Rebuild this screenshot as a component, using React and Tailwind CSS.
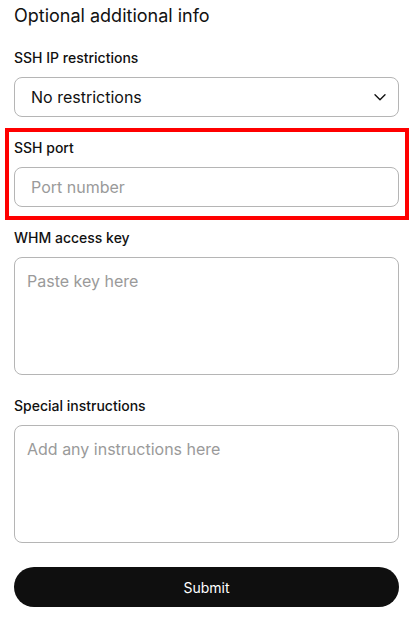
import React from "react";

const inputBase =
  "w-full rounded-lg border border-[#b5b5b5] bg-white text-[16px] text-[#111] placeholder:text-[#9a9a9a] focus:outline-none";

const Field = ({ label, children }) => (
  <div className="flex flex-col gap-[9px]">
    <label className="text-[14px] leading-5 font-medium text-[#111]">{label}</label>
    {children}
  </div>
);

export default function App() {
  return (
    <div
      className="min-h-[622px] w-[410px] bg-white pl-[14px] pr-[11px] pt-[2px] text-[#111]"
      style={{ fontFamily: "Inter, 'Noto Sans', sans-serif" }}
    >
      <h2 className="text-[18px] leading-7 font-normal">Optional additional info</h2>

      <div className="mt-[18px] flex flex-col gap-[21px]">
        <Field label="SSH IP restrictions">
          <div className="relative">
            <select
              className={`${inputBase} h-10 appearance-none pl-[16px] pr-10`}
              defaultValue="none"
            >
              <option value="none">No restrictions</option>
            </select>
            <svg
              className="pointer-events-none absolute right-[12px] top-1/2 -translate-y-1/2"
              width="14"
              height="14"
              viewBox="0 0 14 14"
              fill="none"
            >
              <path d="M2 4.8l5 5 5-5" stroke="#111" strokeWidth="1.4" strokeLinecap="round" strokeLinejoin="round" />
            </svg>
          </div>
        </Field>

        <div className="relative">
          <div className="pointer-events-none absolute -left-[9px] -right-[10px] -top-[10px] -bottom-[13px] border-[4px] border-[#ff0000]" />
          <Field label="SSH port">
            <input className={`${inputBase} h-10 px-[16px]`} placeholder="Port number" />
          </Field>
        </div>

        <Field label="WHM access key">
          <textarea
            className={`${inputBase} h-[118px] resize-none px-3 py-[11px] leading-6`}
            placeholder="Paste key here"
          />
        </Field>

        <Field label="Special instructions">
          <textarea
            className={`${inputBase} h-[118px] resize-none px-3 py-[11px] leading-6`}
            placeholder="Add any instructions here"
          />
        </Field>
      </div>

      <button className="mt-[24px] h-10 w-full rounded-full bg-[#0f0f0f] text-[14px] font-normal text-white">
        Submit
      </button>
    </div>
  );
}
